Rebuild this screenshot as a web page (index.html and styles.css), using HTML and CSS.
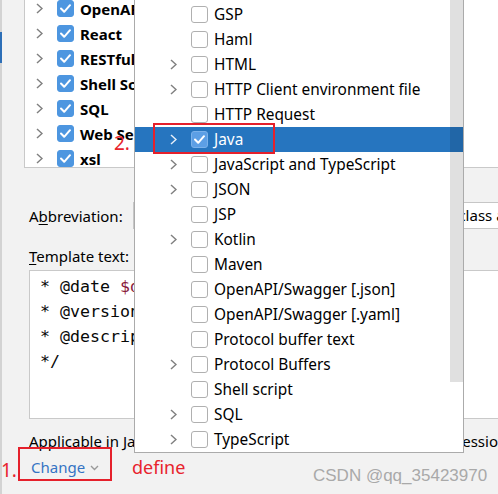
FILE: index.html
```html
<!DOCTYPE html>
<html>
<head>
<meta charset="utf-8">
<link rel="stylesheet" href="styles.css">
</head>
<body>
<div class="window">
  <div class="sidebar"><div class="edge"><div class="marker"></div></div></div>
  <div class="main">
    <div class="tree">
      <div class="tree-list">
        <div class="trow"><svg class="chev" viewBox="0 0 7 11"><polyline points="1,1 6,5.5 1,10"/></svg><span class="cb on"><svg viewBox="0 0 17 17"><polyline points="4,8.5 7.2,11.8 13,5.2"/></svg></span><span class="tlabel">OpenAPI Specifications</span></div>
        <div class="trow"><svg class="chev" viewBox="0 0 7 11"><polyline points="1,1 6,5.5 1,10"/></svg><span class="cb on"><svg viewBox="0 0 17 17"><polyline points="4,8.5 7.2,11.8 13,5.2"/></svg></span><span class="tlabel">React</span></div>
        <div class="trow"><svg class="chev" viewBox="0 0 7 11"><polyline points="1,1 6,5.5 1,10"/></svg><span class="cb on"><svg viewBox="0 0 17 17"><polyline points="4,8.5 7.2,11.8 13,5.2"/></svg></span><span class="tlabel">RESTful Web Services</span></div>
        <div class="trow"><svg class="chev" viewBox="0 0 7 11"><polyline points="1,1 6,5.5 1,10"/></svg><span class="cb on"><svg viewBox="0 0 17 17"><polyline points="4,8.5 7.2,11.8 13,5.2"/></svg></span><span class="tlabel">Shell Script</span></div>
        <div class="trow"><svg class="chev" viewBox="0 0 7 11"><polyline points="1,1 6,5.5 1,10"/></svg><span class="cb on"><svg viewBox="0 0 17 17"><polyline points="4,8.5 7.2,11.8 13,5.2"/></svg></span><span class="tlabel">SQL</span></div>
        <div class="trow"><svg class="chev" viewBox="0 0 7 11"><polyline points="1,1 6,5.5 1,10"/></svg><span class="cb on"><svg viewBox="0 0 17 17"><polyline points="4,8.5 7.2,11.8 13,5.2"/></svg></span><span class="tlabel">Web Services</span></div>
        <div class="trow"><svg class="chev" viewBox="0 0 7 11"><polyline points="1,1 6,5.5 1,10"/></svg><span class="cb on"><svg viewBox="0 0 17 17"><polyline points="4,8.5 7.2,11.8 13,5.2"/></svg></span><span class="tlabel">xsl</span></div>
      </div>
    </div>
    <div class="form">
      <div class="abbr-row">
        <span class="lbl">A<u>b</u>breviation:</span>
        <div class="field abbr-field"></div>
        <span class="lbl">Description:</span>
        <div class="field desc-field">class annotation</div>
      </div>
      <div class="lbl tmpl-label"><u>T</u>emplate text:</div>
      <div class="editor">
        <div class="code"> * @date <span class="var">$date$</span> <span class="var">$time$</span></div>
        <div class="code"> * @version 1.0</div>
        <div class="code"> * @description <span class="var">$description$</span></div>
        <div class="code"> */</div>
      </div>
      <div class="applicable"><span class="app-head">Applicable in Java: statement, declaration, comment,</span><span class="app-tail">expression.</span></div>
      <div class="change-row"><span class="link">Change</span><svg class="down" viewBox="0 0 9 6"><polyline points="1,1 4.5,4.5 8,1"/></svg></div>
    </div>
  </div>
</div>

<div class="popup">
  <div class="prow"><span class="pchev"></span><span class="cb"></span><span class="plabel">GSP</span></div>
  <div class="prow"><span class="pchev"></span><span class="cb"></span><span class="plabel">Haml</span></div>
  <div class="prow"><svg class="chev" viewBox="0 0 7 11"><polyline points="1,1 6,5.5 1,10"/></svg><span class="cb"></span><span class="plabel">HTML</span></div>
  <div class="prow"><svg class="chev" viewBox="0 0 7 11"><polyline points="1,1 6,5.5 1,10"/></svg><span class="cb"></span><span class="plabel">HTTP Client environment file</span></div>
  <div class="prow"><span class="pchev"></span><span class="cb"></span><span class="plabel">HTTP Request</span></div>
  <div class="prow selected"><svg class="chev" viewBox="0 0 7 11"><polyline points="1,1 6,5.5 1,10"/></svg><span class="cb sel"><svg viewBox="0 0 17 17"><polyline points="4,8.5 7.2,11.8 13,5.2"/></svg></span><span class="plabel">Java</span></div>
  <div class="prow"><svg class="chev" viewBox="0 0 7 11"><polyline points="1,1 6,5.5 1,10"/></svg><span class="cb"></span><span class="plabel">JavaScript and TypeScript</span></div>
  <div class="prow"><svg class="chev" viewBox="0 0 7 11"><polyline points="1,1 6,5.5 1,10"/></svg><span class="cb"></span><span class="plabel">JSON</span></div>
  <div class="prow"><span class="pchev"></span><span class="cb"></span><span class="plabel">JSP</span></div>
  <div class="prow"><svg class="chev" viewBox="0 0 7 11"><polyline points="1,1 6,5.5 1,10"/></svg><span class="cb"></span><span class="plabel">Kotlin</span></div>
  <div class="prow"><span class="pchev"></span><span class="cb"></span><span class="plabel">Maven</span></div>
  <div class="prow"><span class="pchev"></span><span class="cb"></span><span class="plabel">OpenAPI/Swagger [.json]</span></div>
  <div class="prow"><span class="pchev"></span><span class="cb"></span><span class="plabel">OpenAPI/Swagger [.yaml]</span></div>
  <div class="prow"><span class="pchev"></span><span class="cb"></span><span class="plabel">Protocol buffer text</span></div>
  <div class="prow"><svg class="chev" viewBox="0 0 7 11"><polyline points="1,1 6,5.5 1,10"/></svg><span class="cb"></span><span class="plabel">Protocol Buffers</span></div>
  <div class="prow"><span class="pchev"></span><span class="cb"></span><span class="plabel">Shell script</span></div>
  <div class="prow"><svg class="chev" viewBox="0 0 7 11"><polyline points="1,1 6,5.5 1,10"/></svg><span class="cb"></span><span class="plabel">SQL</span></div>
  <div class="prow"><svg class="chev" viewBox="0 0 7 11"><polyline points="1,1 6,5.5 1,10"/></svg><span class="cb"></span><span class="plabel">TypeScript</span></div>
  <div class="thumb"></div>
</div>

<div class="anno-box box-java"></div>
<div class="anno-box box-change"></div>
<div class="anno num2">2.</div>
<div class="anno num1">1.</div>
<div class="anno define">define</div>
<div class="watermark">CSDN @qq_35423970</div>
</body>
</html>
```

FILE: styles.css
```css
* { box-sizing: border-box; }

html, body {
  margin: 0;
  padding: 0;
}

body {
  width: 498px;
  height: 494px;
  overflow: hidden;
  position: relative;
  background: #f2f2f2;
  font-family: "Noto Sans", "Open Sans", sans-serif;
  font-size: 15px;
  color: #000;
}

.window {
  display: flex;
  width: 498px;
  height: 494px;
  overflow: hidden;
}

.sidebar {
  width: 24px;
  flex: none;
  display: flex;
}

.edge {
  width: 2px;
  background: #d3d3d3;
}

.marker {
  margin-top: 32px;
  height: 31px;
  background: #2d6fb7;
}

.main {
  flex: 1;
  min-width: 0;
  display: flex;
  flex-direction: column;
  overflow: hidden;
}

.tree {
  height: 168px;
  flex: none;
  background: #fff;
  border-left: 1px solid #c9c9c9;
  border-bottom: 1px solid #c9c9c9;
  overflow: hidden;
}

.tree-list {
  margin-top: -4px;
}

.trow {
  height: 25px;
  display: flex;
  align-items: center;
  padding-left: 11px;
  white-space: nowrap;
}

.chev {
  width: 7px;
  height: 11px;
  flex: none;
}

.chev polyline {
  fill: none;
  stroke: #808080;
  stroke-width: 1.5;
}

.cb {
  width: 17px;
  height: 17px;
  flex: none;
  margin-left: 14px;
  border: 1px solid #b0b0b0;
  border-radius: 3px;
  background: #fff;
  display: flex;
}

.cb svg {
  width: 17px;
  height: 17px;
  margin: -1px;
}

.cb polyline {
  fill: none;
  stroke: #fff;
  stroke-width: 2;
  stroke-linecap: round;
  stroke-linejoin: round;
}

.cb.on {
  background: #4d96e0;
  border-color: #4d96e0;
}

.tlabel {
  margin-left: 6px;
  font-weight: bold;
}

.form {
  padding-left: 5px;
  display: flex;
  flex-direction: column;
}

.lbl {
  white-space: nowrap;
  line-height: 20px;
}

.lbl u {
  text-underline-offset: 2px;
}

.abbr-row {
  margin-top: 34px;
  height: 27px;
  display: flex;
  align-items: center;
  gap: 10px;
  white-space: nowrap;
}

.field {
  height: 27px;
  background: #fff;
  border: 1px solid #c6c6c6;
  line-height: 25px;
  padding-left: 5px;
}

.abbr-field {
  width: 215px;
  flex: none;
}

.desc-field {
  flex: 1;
  margin-right: -20px;
}

.tmpl-label {
  margin-top: 17px;
}

.editor {
  margin-top: 4px;
  height: 149px;
  margin-right: -20px;
  background: #fff;
  border: 1px solid #c9c9c9;
  padding-top: 3px;
}

.code {
  font-family: "DejaVu Sans Mono", "Liberation Mono", monospace;
  font-size: 16.6px;
  line-height: 25px;
  white-space: pre;
  color: #080808;
}

.var {
  color: #8a1b3c;
}

.applicable {
  margin-top: 12px;
  line-height: 20px;
  white-space: nowrap;
  display: flex;
}

.app-head {
  width: 402px;
  flex: none;
  overflow: hidden;
}

.change-row {
  margin-top: 6px;
  padding-left: 2px;
  display: flex;
  align-items: center;
  line-height: 20px;
}

.link {
  color: #3574c4;
}

.down {
  width: 9px;
  height: 6px;
  margin-left: 5px;
  margin-top: 2px;
}

.down polyline {
  fill: none;
  stroke: #9a9a9a;
  stroke-width: 1.4;
}

/* popup */
.popup {
  position: absolute;
  left: 134px;
  top: -1px;
  width: 330px;
  height: 454px;
  background: #fff;
  border: 1px solid #ababab;
  padding-top: 2px;
  overflow: hidden;
  font-size: 15.4px;
}

.prow {
  height: 25px;
  display: flex;
  align-items: center;
  padding-left: 35px;
  white-space: nowrap;
}

.pchev {
  width: 7px;
  flex: none;
}

.plabel {
  margin-left: 6px;
}

.prow.selected {
  background: #2675bf;
  color: #fff;
}

.prow.selected .chev polyline {
  stroke: #e6eef8;
}

.cb.sel {
  background: #5c9fe5;
  border-color: #7ab1ea;
}

.thumb {
  position: absolute;
  right: 0;
  top: 0;
  width: 13px;
  height: 382px;
  background: rgba(0, 0, 0, 0.12);
}

/* annotations */
.anno-box {
  position: absolute;
  border: 2px solid #e5202b;
}

.box-java {
  left: 153px;
  top: 123px;
  width: 122px;
  height: 31px;
}

.box-change {
  left: 18px;
  top: 447px;
  width: 94px;
  height: 34px;
}

.anno {
  position: absolute;
  color: #e8232d;
  line-height: 22px;
  white-space: nowrap;
}

.num2 {
  left: 114px;
  top: 132px;
  font-size: 19px;
}

.num1 {
  left: 1px;
  top: 459px;
  font-size: 19px;
}

.define {
  left: 132px;
  top: 456px;
  font-size: 18px;
}

.watermark {
  position: absolute;
  left: 313px;
  top: 465px;
  font-family: "Liberation Sans", Arial, sans-serif;
  font-size: 17px;
  line-height: 22px;
  color: #a9a9a9;
  white-space: nowrap;
}
```
